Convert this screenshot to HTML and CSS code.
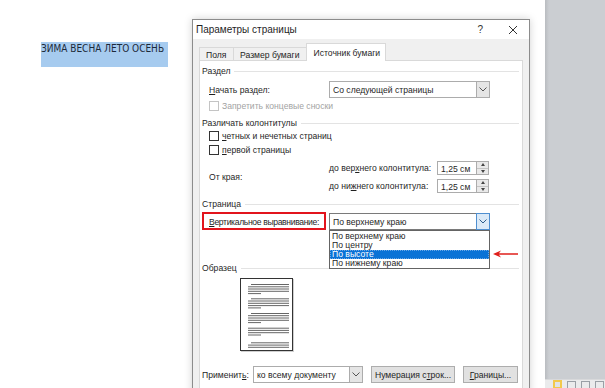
FILE: index.html
```html
<!DOCTYPE html>
<html lang="ru">
<head>
<meta charset="UTF-8">
<title>Параметры страницы</title>
<link rel="stylesheet" href="styles.css">
</head>
<body>
<div class="screen">
    <div class="doc">
        <span class="sel">ЗИМА ВЕСНА ЛЕТО ОСЕНЬ</span>
    </div>
    <div class="side">
        <div class="status">
            <span class="sb-icon on"></span>
            <span class="sb-icon book"></span>
            <span class="sb-icon"></span>
            <span class="sb-icon lines"></span>
        </div>
    </div>

    <div class="dialog">
        <div class="titlebar">
            <span class="title">Параметры страницы</span>
            <span class="help">?</span>
            <svg class="close" width="10" height="10" viewBox="0 0 10 10"><path d="M1 1 L9 9 M9 1 L1 9" stroke="#333" stroke-width="1"/></svg>
        </div>
        <div class="dlg-body">
            <div class="tabs">
                <div class="tab">Поля</div>
                <div class="tab">Размер бумаги</div>
                <div class="tab active">Источник бумаги</div>
            </div>
            <div class="panel">
                <div class="legend"><span>Раздел</span></div>
                <div class="row r-start">
                    <label class="lbl"><u>Н</u>ачать раздел:</label>
                    <div class="combo wide">
                        <span class="val">Со следующей страницы</span>
                        <span class="arrow"><svg width="8" height="5" viewBox="0 0 8 5"><path d="M0.5 0.5 L4 4 L7.5 0.5" fill="none" stroke="#555"/></svg></span>
                    </div>
                </div>
                <div class="row r-check">
                    <span class="box off"></span><span class="dim">Запретить концевые сноски</span>
                </div>

                <div class="legend l2"><span>Различать колонтитулы</span></div>
                <div class="row r-check">
                    <span class="box"></span><span><u>ч</u>етных и нечетных страниц</span>
                </div>
                <div class="row r-check">
                    <span class="box"></span><span><u>п</u>ервой страницы</span>
                </div>
                <div class="row r-edge">
                    <label class="lbl">От края:</label>
                    <div class="spins">
                        <div class="spin-row">
                            <span class="spin-lbl">до вер<u>х</u>него колонтитула:</span>
                            <div class="spin"><span class="val">1,25 см</span><span class="btns"><i class="up"></i><i class="down"></i></span></div>
                        </div>
                        <div class="spin-row">
                            <span class="spin-lbl">до ни<u>ж</u>него колонтитула:</span>
                            <div class="spin"><span class="val">1,25 см</span><span class="btns"><i class="up"></i><i class="down"></i></span></div>
                        </div>
                    </div>
                </div>

                <div class="legend l3"><span>Страница</span></div>
                <div class="row r-valign">
                    <label class="lbl marked"><u>В</u>ертикальное выравнивание:</label>
                    <div class="combo wide open">
                        <span class="val">По верхнему краю</span>
                        <span class="arrow"><svg width="8" height="5" viewBox="0 0 8 5"><path d="M0.5 0.5 L4 4 L7.5 0.5" fill="none" stroke="#2b5d8c"/></svg></span>
                        <ul class="list">
                            <li>По верхнему краю</li>
                            <li>По центру</li>
                            <li class="hl">По высоте</li>
                            <li>По нижнему краю</li>
                        </ul>
                        <svg class="pointer" width="26" height="8" viewBox="0 0 26 8"><path d="M0 4 L8 0.5 L6 3.2 L25 3.2 L25 4.8 L6 4.8 L8 7.5 Z" fill="#e0201c"/></svg>
                    </div>
                </div>

                <div class="legend l4"><span>Образец</span></div>
                <div class="preview">
                    <svg class="page" width="54" height="74" viewBox="0 0 54 74">
                        <rect x="0.5" y="0.5" width="52" height="72" fill="#fff" stroke="#333"/>
                        <g stroke="#555" stroke-width="0.9">
                            <path d="M11 6.5H49 M8 8.8H49 M8 11H49 M8 13.3H49 M8 15.6H21"/>
                            <path d="M11 20.8H49 M8 23H49 M8 25.3H49 M8 27.6H49 M8 29.9H21"/>
                            <path d="M11 35.5H49 M8 37.7H49 M8 40H49 M8 42.3H49 M8 44.6H21"/>
                            <path d="M8 50.2H49 M8 52.4H49 M8 54.7H49 M8 57H21"/>
                            <path d="M11 64.8H49 M8 67.1H49 M8 69.3H49"/>
                        </g>
                    </svg>
                </div>

                <div class="row r-apply">
                    <label class="lbl short">Применит<u>ь</u>:</label>
                    <div class="combo apply">
                        <span class="val">ко всему документу</span>
                        <span class="arrow"><svg width="8" height="5" viewBox="0 0 8 5"><path d="M0.5 0.5 L4 4 L7.5 0.5" fill="none" stroke="#555"/></svg></span>
                    </div>
                    <button class="btn b-num">Нумерация с<u>т</u>рок...</button>
                    <button class="btn b-brd"><u>Г</u>раницы...</button>
                </div>
            </div>
        </div>
    </div>
</div>
</body>
</html>
```

FILE: styles.css
```css
* {
    box-sizing: border-box;
}

body {
    margin: 0;
    font-family: "Liberation Sans", Arial, sans-serif;
    color: #1f1f1f;
}

.screen {
    position: relative;
    display: flex;
    width: 605px;
    height: 388px;
    overflow: hidden;
}

.doc {
    width: 545px;
    background: #fff;
    padding: 38px 0 0 41px;
}

.sel {
    display: inline-block;
    width: 127px;
    height: 25px;
    padding-top: 1px;
    background: #a6cbef;
    font-family: "DejaVu Sans Condensed", "Liberation Sans", sans-serif;
    font-size: 10px;
    white-space: nowrap;
    color: #1d2a3a;
}

.side {
    flex: 1;
    display: flex;
    flex-direction: column;
    justify-content: flex-end;
    background: linear-gradient(to right, #b9bcc0, #cbced2 4px, #cbced2);
}

.status {
    height: 9px;
    display: flex;
    gap: 5px;
    padding-left: 8px;
    background: #eaebec;
    border-top: 1px solid #d8d9db;
}

.sb-icon {
    width: 9px;
    height: 9px;
    border: 1px solid #9aa0a6;
    margin-top: 1px;
}

.sb-icon.on {
    border: 2px solid #f2c94c;
    background: #dfe3e8;
    margin-top: 0;
}

/* диалог */
.dialog {
    position: absolute;
    left: 192px;
    top: 19px;
    width: 338px;
    height: 380px;
    border: 1px solid #8c8c8c;
    background: #f0f0f0;
    box-shadow: 0 0 8px rgba(0, 0, 0, 0.18);
}

.titlebar {
    height: 19px;
    background: #fff;
    display: flex;
    align-items: center;
    padding-left: 3px;
    font-size: 10px;
}

.title {
    flex: 1;
}

.help {
    font-size: 10px;
    margin-right: 25px;
    color: #333;
}

.close {
    margin-right: 11px;
}

.dlg-body {
    padding: 4px 6px 0 6px;
    font-size: 8.6px;
    white-space: nowrap;
}

.tabs {
    display: flex;
    align-items: flex-end;
    height: 17px;
}

.tab {
    height: 13px;
    padding: 2px 7px 0 6px;
    background: #f0f0f0;
    border: 1px solid #d9d9d9;
    border-bottom: none;
    margin-right: -1px;
}

.tab:first-child {
    width: 35px;
}

.tab.active {
    height: 18px;
    margin-bottom: -1px;
    background: #fff;
    padding: 4px 6px 0 6px;
    position: relative;
    z-index: 1;
    width: 80px;
}

.panel {
    background: #fff;
    border: 1px solid #d9d9d9;
    height: 340px;
    padding: 4px 3px 0 2px;
}

.legend {
    display: flex;
    align-items: center;
    height: 12px;
    gap: 4px;
}

.legend::after {
    content: "";
    flex: 1;
    border-top: 1px solid #e3e3e3;
}

.legend.l2 { margin-top: 4px; }
.legend.l3 { margin-top: 2px; }
.legend.l4 { margin-top: 32px; }

.row {
    display: flex;
    align-items: center;
    padding-left: 7px;
}

.lbl {
    width: 120px;
}

.r-start {
    height: 17px;
    margin-top: 4px;
}

.r-check {
    height: 14px;
    gap: 3px;
}

.r-start + .r-check {
    margin-top: 1px;
}

.box {
    width: 10px;
    height: 10px;
    border: 1px solid #333;
    background: #fff;
}

.box.off {
    border-color: #c4c4c4;
}

.dim {
    color: #a3a3a3;
}

.combo {
    position: relative;
    display: flex;
    height: 17px;
    border: 1px solid #acacac;
    background: #fff;
}

.combo .val {
    flex: 1;
    padding: 3px 0 0 3px;
}

.combo .arrow {
    width: 13px;
    display: flex;
    align-items: center;
    justify-content: center;
    background: #e5e5e5;
    border-left: 1px solid #acacac;
}

.combo.wide {
    width: 161px;
}

.combo.open {
    border-color: #7a7a7a;
}

.combo.open .arrow {
    background: #dbeaf8;
    border: 1px solid #4f8fd0;
    margin: -1px -1px -1px 0;
    width: 14px;
}

.list {
    position: absolute;
    left: -1px;
    top: 16px;
    width: 161px;
    margin: 0;
    padding: 1px 0 0;
    list-style: none;
    background: #fff;
    border: 1px solid #646464;
    z-index: 2;
}

.list li {
    height: 9px;
    line-height: 9px;
    padding-left: 2px;
}

.list li.hl {
    background: #0a72d6;
    color: #fff;
    outline: 1px dotted #6aa7e6;
    outline-offset: -1px;
}

.pointer {
    position: absolute;
    left: 163px;
    top: 36px;
}

.r-edge {
    height: 38px;
    margin-top: 1px;
}

.spins {
    display: flex;
    flex-direction: column;
    gap: 4px;
}

.spin-row {
    display: flex;
    align-items: center;
}

.spin-lbl {
    width: 108px;
}

.spin {
    display: flex;
    width: 52px;
    height: 14px;
    border: 1px solid #acacac;
    background: #fff;
}

.spin .val {
    flex: 1;
    padding: 2px 0 0 3px;
}

.btns {
    width: 12px;
    display: flex;
    flex-direction: column;
    border-left: 1px solid #acacac;
}

.btns i {
    flex: 1;
    display: flex;
    align-items: center;
    justify-content: center;
    background: #e9e9e9;
}

.btns i.up {
    border-bottom: 1px solid #c4c4c4;
}

.btns i::before {
    content: "";
    border-left: 2.5px solid transparent;
    border-right: 2.5px solid transparent;
}

.btns i.up::before {
    border-bottom: 3px solid #444;
}

.btns i.down::before {
    border-top: 3px solid #444;
}

.r-valign {
    height: 18px;
    margin-top: 2px;
    padding-left: 0;
}

.lbl.marked {
    width: 124px;
    height: 18px;
    margin-right: 3px;
    padding: 3px 0 0 5px;
    border: 2px solid #e2141c;
    letter-spacing: -0.35px;
}

.preview {
    height: 91px;
    padding: 4px 0 0 38px;
}

.page {
    display: block;
    filter: drop-shadow(1px 1px 0 #cfcfcf);
}

.r-apply {
    height: 17px;
    margin-top: 1px;
    padding-left: 0;
}

.lbl.short {
    width: 51px;
}

.combo.apply {
    width: 110px;
}

.btn {
    height: 17px;
    margin-left: 8px;
    padding: 0;
    font-family: inherit;
    font-size: 8.6px;
    color: #1f1f1f;
    background: #e1e1e1;
    border: 1px solid #adadad;
}

.b-num {
    width: 84px;
}

.b-brd {
    width: 55px;
}
```
